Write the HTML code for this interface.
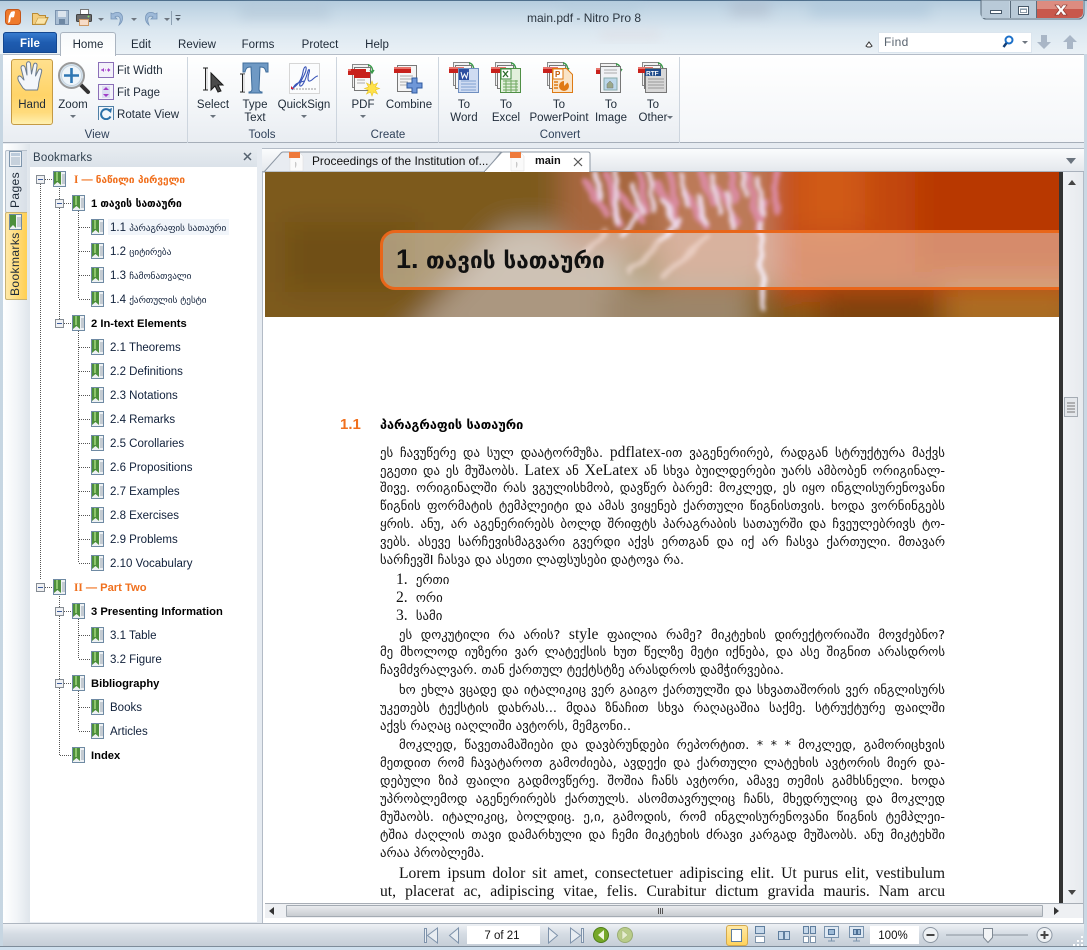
<!DOCTYPE html>
<html><head><meta charset="utf-8"><title>main.pdf - Nitro Pro 8</title>
<style>
html,body{margin:0;padding:0}
body{position:relative;width:1087px;height:950px;overflow:hidden;background:#d9e5ef;font-family:"Liberation Sans","DejaVu Sans",sans-serif;font-size:11.5px;color:#1e2a38}
.a{position:absolute}
.t{position:absolute;white-space:nowrap;line-height:14px;letter-spacing:.03px}
.c{transform:translateX(-50%);margin-top:1px}
.g{color:#2f4159}
.r{position:absolute;white-space:nowrap;line-height:16px;font-size:11.5px;color:#10203a;margin-top:1px}
.k{font-family:"DejaVu Sans",sans-serif}
.b{font-weight:bold;color:#000;font-size:11.2px}
.o{color:#f0701e}
.l{position:absolute;left:380px;width:565px;height:18px;line-height:18px;font-family:"DejaVu Sans",sans-serif;font-size:12.8px;color:#111;text-align:justify;text-align-last:justify;margin-top:1px}
.i{left:399px;width:546px}
.n{text-align-last:left}
.l span{font-family:"Liberation Serif",serif;font-size:15.6px}
</style></head><body>

<!-- window chrome background -->
<div class="a" style="left:0;top:0;width:1087px;height:54px;background:linear-gradient(#b4cbdd 0,#c5d8e6 12px,#dbe7f0 30px,#eaf1f6 54px)"></div>
<div class="a" style="left:0;top:0;width:1087px;height:1px;background:#4f6f8c"></div>
<div class="a" style="left:0;top:54px;width:3px;height:896px;background:#c7d6e2"></div>
<div class="a" style="left:1084px;top:54px;width:3px;height:896px;background:#c9d8e4"></div>
<div class="a" style="left:3px;top:54px;width:1081px;height:892px;background:#e6ebf1"></div>

<svg class="a" style="left:0;top:0" width="1087" height="54">
 <defs><filter id="bl"><feGaussianBlur stdDeviation="6"/></filter></defs>
 <g filter="url(#bl)" opacity=".3">
  <rect x="240" y="5" width="90" height="14" fill="#9fb4c6"/><rect x="730" y="2" width="40" height="14" fill="#9b9fb0"/>
  <rect x="810" y="4" width="120" height="12" fill="#8fb0cc"/><rect x="560" y="4" width="80" height="10" fill="#a7c4d6"/>
  <rect x="600" y="30" width="60" height="10" fill="#dccfd3"/>
 </g>
 <!-- app logo -->
 <rect x="5.500" y="9.500" width="15" height="15" rx="3" fill="#ee7a2c" stroke="#c4561a"/>
 <path d="M11 12c2-1 4-1 4 0l-1 5c-2 1-3 0-3 0l-1 5-2 1 1-7z" fill="#fff"/>
 <!-- folder -->
 <path d="M32.500 24.500v-11h5l2 2h6v2h2.500l-3 7z" fill="#f3cd7e" stroke="#b88a35"/>
 <path d="M35 24l3-6h9.500l-3 6z" fill="#fbe4a8" stroke="#c19a45" stroke-width=".6"/>
 <!-- save -->
 <rect x="55.500" y="10.500" width="13" height="14" fill="#a8bdd3" stroke="#7b93ae"/>
 <rect x="58" y="11" width="8" height="6" fill="#dbe4ed"/><rect x="59" y="19" width="6" height="5" fill="#6d87a3"/>
 <!-- print -->
 <rect x="80.500" y="9.500" width="8" height="5" fill="#fff" stroke="#777"/>
 <rect x="76.500" y="14.500" width="15" height="7" rx="1" fill="#6b6b6b" stroke="#444"/>
 <rect x="79.500" y="19.500" width="9" height="6" fill="#f6dcc8" stroke="#c96"/>
 <circle cx="88.500" cy="16.500" r="1" fill="#7fdc6a"/>
 <path d="M98 18h6l-3 3z" fill="#6e7680"/>
 <!-- undo -->
 <path d="M111 13v6h6l-2-2c3-2 6 0 5 5l-1 3c4-3 5-9 1-12-2-1-5-1-7 1z" fill="#9db9d8" stroke="#7896b8" stroke-width=".8"/>
 <path d="M131 18h6l-3 3z" fill="#6e7680"/>
 <!-- redo -->
 <path d="M157 13v6h-6l2-2c-3-2-6 0-5 5l1 3c-4-3-5-9-1-12 2-1 5-1 7 1z" fill="#9db9d8" stroke="#7896b8" stroke-width=".8"/>
 <path d="M164 18h6l-3 3z" fill="#6e7680"/>
 <rect x="171" y="11" width="1" height="14" fill="#8da0b2"/>
 <path d="M175.500 15h5v1h-5zM175.500 18h5l-2.500 3z" fill="#55606c"/>
 <!-- window buttons -->
 <path d="M981 0h103v13a5 6 0 0 1-5 6h-93a5 6 0 0 1-5-6z" fill="#d2e0ea" stroke="#5a6c7c"/>
 <rect x="981.500" y="1" width="28" height="17" fill="#b9cad8"/><rect x="1010.500" y="1" width="26" height="17" fill="#b9cad8" />
 <path d="M1036 1h47v12a5 5 0 0 1-5 5h-42z" fill="#c8584c"/>
 <path d="M1036 1h47v8h-47z" fill="#dd8c80"/>
 <rect x="1010" y="1" width="1" height="17" fill="#5a6c7c"/><rect x="1036" y="1" width="1" height="17" fill="#5a6c7c"/>
 <rect x="990.500" y="10.500" width="11" height="3" fill="#fff" stroke="#47596a"/>
 <rect x="1018.500" y="6.500" width="10" height="8" fill="none" stroke="#47596a"/><rect x="1019.500" y="7.500" width="8" height="6" fill="none" stroke="#fff"/><rect x="1020.500" y="9.500" width="6" height="3" fill="#fff" stroke="#47596a" stroke-width=".5"/>
 <path d="M1055 5l4 0 2 3 2-3 4 0-4 5 4 5-4 0-2-3-2 3-4 0 4-5z" fill="#fff" stroke="#7a2b22" stroke-width=".6"/>
 <!-- find area -->
 <rect x="878.500" y="32.500" width="153" height="20" fill="#fff" stroke="#dbe5ee"/>
 <path d="M866 46l3-4 3 4-1.500 1h-3z" fill="#fff" stroke="#333" stroke-width="1"/>
 <circle cx="1009" cy="40" r="3.500" fill="none" stroke="#1c70c8" stroke-width="2"/><path d="M1006.500 43l-3 4" stroke="#123f78" stroke-width="2.400"/>
 <path d="M1022 41h6l-3 3z" fill="#6e7680"/>
 <path d="M1041 35h6v7h4l-7 7-7-7h4z" fill="#a9b6c6"/>
 <path d="M1067 49h6v-7h4l-7-7-7 7h4z" fill="#a9b6c6"/>
</svg>
<div class="t" style="left:527px;top:11px;color:#2c3640;font-size:12px;letter-spacing:0">main.pdf - Nitro Pro 8</div>
<div class="t" style="left:884px;top:35px;color:#5a6570;font-size:12px;letter-spacing:.3px">Find</div>

<!-- ribbon tabs -->
<div class="a" style="left:3px;top:32px;width:54px;height:21px;background:linear-gradient(#3a7fd2,#1e5cb0 50%,#1a53a4);border-radius:3px 3px 0 0;box-shadow:inset 0 0 0 1px #14478f"></div>
<div class="t c" style="left:30px;top:36px;color:#fff;font-weight:bold;font-size:11.500px">File</div>
<div class="a" style="left:60px;top:32px;width:54px;height:23px;background:linear-gradient(#f6f9fb,#fff);border:1px solid #aab4c0;border-bottom:0;border-radius:3px 3px 0 0;z-index:2"></div>
<div class="t c" style="left:88px;top:37px;z-index:3">Home</div>
<div class="t c" style="left:141px;top:37px">Edit</div>
<div class="t c" style="left:197px;top:37px">Review</div>
<div class="t c" style="left:258px;top:37px">Forms</div>
<div class="t c" style="left:320px;top:37px">Protect</div>
<div class="t c" style="left:377px;top:37px">Help</div>

<!-- ribbon -->
<div class="a" style="left:3px;top:54px;width:1081px;height:89px;background:linear-gradient(#fff,#f6f8fa 45%,#e9edf2);border-top:1px solid #b4bcc7;border-bottom:1px solid #a6aeb9;box-sizing:border-box"></div>
<div class="a" style="left:187px;top:57px;width:1px;height:86px;background:#cdd5de"></div>
<div class="a" style="left:336px;top:57px;width:1px;height:86px;background:#cdd5de"></div>
<div class="a" style="left:438px;top:57px;width:1px;height:86px;background:#cdd5de"></div>
<div class="a" style="left:679px;top:57px;width:1px;height:86px;background:#cdd5de"></div>
<div class="a" style="left:680px;top:55px;width:404px;height:87px;background:linear-gradient(#fff,#f3f5f8)"></div>

<div class="a" style="left:11px;top:59px;width:40px;height:64px;background:linear-gradient(#ffe08e,#ffd468 55%,#ffdb7c 82%,#fff0b0);border:1px solid #c49a45;border-radius:3px"></div>

<svg class="a" style="left:0;top:55px" width="700" height="65" viewBox="0 55 700 65">
 <defs>
  <g id="stack">
   <rect x="4.500" y=".5" width="16" height="23" fill="#f2f2f2" stroke="#888"/>
   <rect x="6.500" y="3.500" width="16" height="23" fill="#f8f8f8" stroke="#777"/>
   <path d="M9 10h11M9 13h11M9 16h8M9 19h8" stroke="#aaa"/>
   <rect x="0" y="5" width="15" height="6" fill="#c8211c"/><rect x="0" y="5" width="15" height="2" fill="#e8746c"/>
   <path d="M20 1a5 5 0 0 1 4 7M22 6l2 3 2-3" fill="none" stroke="#3a9a4a" stroke-width="1.400"/>
  </g>
 </defs>
 <!-- hand -->
 <path d="M23 88c-3-5-6-8-5-11 1-2 3-1 5 2l1 1-3-12c0-3 3-3 4-1l2 8-.5-11c0-3 4-3 4 0l1 10 2-9c1-3 4-2 3.500 1l-1.500 10 3-6c1-2 4-1 3 2-1 5-3 9-3 14l-1 4h-12z" fill="#f3f6fa" stroke="#6b7c90" stroke-linejoin="round"/>
 <!-- zoom -->
 <path d="M80 84l8 8" stroke="#333" stroke-width="4" stroke-linecap="round"/>
 <circle cx="71.500" cy="75.500" r="12.500" fill="#d6e6f2" stroke="#9a9a9a" stroke-width="2"/>
 <circle cx="71.500" cy="75.500" r="10" fill="#eef5fa" stroke="#c8d4de"/>
 <path d="M71.500 68v15M64 75.500h15" stroke="#2f77b3" stroke-width="2.600"/>
 <!-- fit -->
 <rect x="98.500" y="62.500" width="15" height="15" fill="#f3f1fa" stroke="#8b6fb8"/>
 <path d="M101 70h10" stroke="#a23cc8" stroke-dasharray="1 1"/><path d="M104 68l-2.500 2 2.500 2zM108 68l2.500 2-2.500 2z" fill="#a23cc8"/>
 <rect x="98.500" y="84.500" width="15" height="15" fill="#f3f1fa" stroke="#8b6fb8"/>
 <rect x="102" y="86" width="8" height="12" fill="#dcdcf2"/><path d="M106 87l-3 3h6zM106 97l-3-3h6z" fill="#a23cc8"/>
 <rect x="98.500" y="106.500" width="15" height="15" fill="#f1f6fb" stroke="#4f7fa6"/>
 <path d="M109.500 110.500a5 5 0 1 0 1 6" fill="none" stroke="#2a70a8" stroke-width="2"/><path d="M107 110l4 3 1-5z" fill="#2a70a8"/>
 <!-- select -->
 <path d="M203 68h5M203 90h5M205.500 68v22" stroke="#222" fill="none"/><path d="M207 68.500v21" stroke="#ccc"/>
 <path d="M211 73v17l4-4 3 6 3-1-3-6h5z" fill="#4a4a4a" stroke="#1a1a1a"/>
 <!-- type text -->
 <path d="M243 63h25v9h-2c-1-4-2-5-6-5l-1 22c0 2 1 3 3 3v1h-13v-1c2 0 3-1 3-3l-1-22c-4 0-5 1-6 5h-2z" fill="#6f99c4" stroke="#3f6d9c"/>
 <path d="M240 74h5M240 92h5M242.500 74v18" stroke="#222"/><path d="M244 74v18" stroke="#ccc"/>
 <!-- quicksign -->
 <rect x="289.500" y="63.500" width="30" height="30" fill="#fbfcfd" stroke="#d6d6d6"/>
 <path d="M292 90c4-9 8-7 12-9M293 88c6-4 9-10 10-16 1-6 4-7 3-2-1 6-8 14-6 16 3 1 6-8 8-15 1-3 2-1 1 2s-2 9 1 8c3-1 5-5 8-5" fill="none" stroke="#3a55b8" stroke-width="1.100"/>
 <path d="M293 89h24" stroke="#999" stroke-dasharray="2 1"/><path d="M291 86l3 3-3 0z" fill="#d0203a"/>
 <!-- PDF -->
 <use href="#stack" x="348" y="64"/><rect x="351" y="69" width="15" height="6" fill="#c8211c"/>
 <rect x="354" y="72" width="16" height="6" fill="#c8211c"/>
 <path d="M372 81l1.500 4 4-2-2 4 4 1.500-4 1.500 2 4-4-2-1.500 4-1.500-4-4 2 2-4-4-1.500 4-1.500-2-4 4 2z" fill="#ffe14a" stroke="#e8c420" stroke-width=".6"/>
 <!-- combine -->
 <rect x="397.500" y="65.500" width="19" height="26" fill="#f5f5f5" stroke="#777"/>
 <path d="M400 76h13M400 79h13M400 82h8M400 85h8" stroke="#aaa"/>
 <rect x="394" y="67" width="17" height="6" fill="#c8211c"/><rect x="394" y="67" width="17" height="2" fill="#e8746c"/>
 <path d="M412 78h5v5h5v5h-5v5h-5v-5h-5v-5h5z" fill="#6f97d8" stroke="#2f5aa0"/>
 <!-- word -->
 <use href="#stack" x="449" y="62"/>
 <rect x="458.500" y="68.500" width="20" height="24" fill="#cfdcf2" stroke="#6f8fc0"/>
 <path d="M461 81h15M461 84h15M461 87h15M461 90h15" stroke="#7f9fd0"/>
 <rect x="459" y="69" width="10" height="11" fill="#2e4fa0"/><path d="M461 72l1.500 6 2-4 2 4 1.500-6" fill="none" stroke="#fff"/>
 <!-- excel -->
 <use href="#stack" x="491" y="62"/>
 <rect x="500.500" y="68.500" width="20" height="24" fill="#e2f0dc" stroke="#4f8f45"/>
 <path d="M503 81h15M503 84h15M503 87h15M503 90h15M506 80v12M511 80v12M516 80v12" stroke="#6fa860"/>
 <rect x="501" y="69" width="10" height="10" fill="#fff" stroke="#3e8a3c"/><path d="M503 71l5 6M508 71l-5 6" stroke="#2a6a2a" stroke-width="1.300"/>
 <!-- ppt -->
 <use href="#stack" x="543" y="62"/>
 <path d="M552.500 68.500h14l6 6v18h-20z" fill="#f9e4c8" stroke="#dd7a14"/>
 <rect x="553" y="69" width="10" height="10" fill="#fff" stroke="#dd7a14"/><text x="555" y="77" font-size="8" font-weight="bold" fill="#c05a0a" font-family="Liberation Sans,sans-serif">P</text>
 <circle cx="564" cy="86" r="5" fill="#e07a14"/><path d="M564 86v-6h6z" fill="#f9e4c8"/>
 <path d="M554 82h4M554 85h4M554 88h4" stroke="#dd7a14" stroke-width="1.500"/>
 <!-- image -->
 <use href="#stack" x="596" y="63"/>
 <rect x="600.500" y="66.500" width="20" height="26" fill="#f0f2f5" stroke="#777"/>
 <rect x="604" y="78" width="13" height="12" fill="#bcd8ea" stroke="#8aa"/><path d="M607 88v-4l3-3 3 3v4z" fill="#9aa88a" stroke="#777" stroke-width=".5"/>
 <path d="M604 70h13M604 73h13" stroke="#aaa"/>
 <!-- other -->
 <use href="#stack" x="638" y="62"/>
 <rect x="645.500" y="68.500" width="21" height="24" fill="#d8d8d8" stroke="#777"/>
 <path d="M648 79h16M648 82h16M648 85h16M648 88h16" stroke="#999"/>
 <rect x="645" y="69" width="16" height="7" fill="#1e4a8a"/><text x="646" y="75.500" font-size="6.500" font-weight="bold" fill="#fff" font-family="Liberation Sans,sans-serif">RTF</text>
 <!-- carets -->
 <path d="M70 115h6l-3 3zM210 115h6l-3 3zM301 115h6l-3 3zM360 115h6l-3 3zM667 116h6l-3 3z" fill="#6a737d"/>
</svg>

<div class="t c" style="left:32px;top:97px">Hand</div>
<div class="t c" style="left:73px;top:97px" >Zoom</div>
<div class="t" style="left:117px;top:64px">Fit Width</div>
<div class="t" style="left:117px;top:86px">Fit Page</div>
<div class="t" style="left:117px;top:108px">Rotate View</div>
<div class="t c g" style="left:97px;top:127px">View</div>
<div class="t c" style="left:213px;top:97px">Select</div>
<div class="t c" style="left:255px;top:97px">Type</div>
<div class="t c" style="left:255px;top:110px">Text</div>
<div class="t c" style="left:304px;top:97px">QuickSign</div>
<div class="t c g" style="left:262px;top:127px">Tools</div>
<div class="t c" style="left:363px;top:97px">PDF</div>
<div class="t c" style="left:409px;top:97px">Combine</div>
<div class="t c g" style="left:388px;top:127px">Create</div>
<div class="t c" style="left:464px;top:97px">To</div><div class="t c" style="left:464px;top:110px">Word</div>
<div class="t c" style="left:506px;top:97px">To</div><div class="t c" style="left:506px;top:110px">Excel</div>
<div class="t c" style="left:559px;top:97px">To</div><div class="t c" style="left:559px;top:110px">PowerPoint</div>
<div class="t c" style="left:611px;top:97px">To</div><div class="t c" style="left:611px;top:110px">Image</div>
<div class="t c" style="left:653px;top:97px">To</div><div class="t c" style="left:653px;top:110px">Other</div>
<div class="t c g" style="left:560px;top:127px">Convert</div>

<!-- left rail -->
<div class="a" style="left:3px;top:144px;width:27px;height:780px;background:linear-gradient(90deg,#fff,#f2f5f8 50%,#dfe5eb)"></div>
<div class="a" style="left:5px;top:150px;width:21px;height:61px;background:linear-gradient(90deg,#e9eef3,#d8dfe7);border:1px solid #b6c0cb;border-right:0;border-radius:2px 0 0 2px"></div>
<div class="a" style="left:5px;top:212px;width:21px;height:86px;background:linear-gradient(90deg,#ffe9a8,#ffcf52);border:1px solid #c8b273;border-right:0;border-radius:2px 0 0 2px"></div>
<svg class="a" style="left:8px;top:151px" width="16" height="80">
 <rect x="1.500" y=".5" width="12" height="15" fill="#eef2f6" stroke="#7f96ac"/>
 <rect x="3" y="2" width="9" height="3" fill="#bccbdb"/><path d="M3 7h9M3 9h9M3 11h9M3 13h9" stroke="#9fb0c2"/>
 <rect x="1.500" y="63.500" width="12" height="15" fill="#eef1f4" stroke="#6f8aa3"/><path d="M2 64h6v13l-3-3-3 3z" fill="#4d8f3c"/><path d="M9 67h4M9 69h4M9 71h4M9 73h4M9 75h4" stroke="#9aa5af"/>
</svg>
<div class="a" style="left:8px;top:172px;height:36px;width:15px;writing-mode:vertical-rl;transform:rotate(180deg);line-height:15px;text-align:left;letter-spacing:.4px;white-space:nowrap;font-size:12px">Pages</div>
<div class="a" style="left:8px;top:235px;height:61px;width:15px;writing-mode:vertical-rl;transform:rotate(180deg);line-height:15px;text-align:left;letter-spacing:.4px;white-space:nowrap;font-size:12px">Bookmarks</div>

<!-- bookmarks panel -->
<div class="a" style="left:30px;top:149px;width:227px;height:18px;background:linear-gradient(#e6ebf0,#dbe2e9)"></div>
<div class="t" style="left:33px;top:151px;font-size:11.500px;color:#30404f;letter-spacing:.2px">Bookmarks</div>
<svg class="a" style="left:243px;top:152px" width="9" height="9"><path d="M1 1l7 7M8 1l-7 7" stroke="#55626f" stroke-width="1.500"/></svg>
<div class="a" style="left:30px;top:167px;width:227px;height:755px;background:#fff"></div>
<div class="a" style="left:108px;top:219px;width:121px;height:16px;background:#f1f5fa"></div>

<svg class="a" style="left:0;top:160px" width="260" height="610" viewBox="0 160 260 610">
 <defs>
  <g id="bm"><rect x=".5" y=".5" width="12" height="15" fill="#eef1f4" stroke="#6f8aa3"/><path d="M1 1h7v13l-3.500-3-3.500 3z" fill="#4d8f3c"/><path d="M3 1h2v9h-2z" fill="#8dc66e"/><path d="M9 4h3M9 6h3M9 8h3M9 10h3M9 12h3" stroke="#9aa5af"/></g>
  <g id="ex"><rect x=".5" y=".5" width="8" height="8" fill="#f0f1f3" stroke="#858c94"/><rect x="2" y="4" width="5" height="1" fill="#3b5a9a"/></g>
 </defs>
 <g stroke="#555" stroke-dasharray="1 1" fill="none">
  <path d="M40.500 184v395M59.500 184v139M59.500 592v163M78.500 207v92M78.500 327v236M78.500 615v44M78.500 687v44"/>
  <path d="M45 179.500h7M64 203.500h7M79 227.500h11M79 251.500h11M79 275.500h11M79 299.500h11M64 323.500h7"/>
  <path d="M79 347.500h11M79 371.500h11M79 395.500h11M79 419.500h11M79 443.500h11M79 467.500h11M79 491.500h11M79 515.500h11M79 539.500h11M79 563.500h11"/>
  <path d="M45 587.500h7M64 611.500h7M79 635.500h11M79 659.500h11M64 683.500h7M79 707.500h11M79 731.500h11M60 755.500h11"/>
 </g>
 <use href="#ex" x="36" y="175"/><use href="#ex" x="55" y="199"/><use href="#ex" x="55" y="319"/><use href="#ex" x="36" y="583"/><use href="#ex" x="55" y="607"/><use href="#ex" x="55" y="679"/>
 <use href="#bm" x="53" y="171"/><use href="#bm" x="72" y="195"/>
 <use href="#bm" x="91" y="219"/><use href="#bm" x="91" y="243"/><use href="#bm" x="91" y="267"/><use href="#bm" x="91" y="291"/>
 <use href="#bm" x="72" y="315"/>
 <use href="#bm" x="91" y="339"/><use href="#bm" x="91" y="363"/><use href="#bm" x="91" y="387"/><use href="#bm" x="91" y="411"/><use href="#bm" x="91" y="435"/><use href="#bm" x="91" y="459"/><use href="#bm" x="91" y="483"/><use href="#bm" x="91" y="507"/><use href="#bm" x="91" y="531"/><use href="#bm" x="91" y="555"/>
 <use href="#bm" x="53" y="579"/><use href="#bm" x="72" y="603"/><use href="#bm" x="91" y="627"/><use href="#bm" x="91" y="651"/><use href="#bm" x="72" y="675"/><use href="#bm" x="91" y="699"/><use href="#bm" x="91" y="723"/><use href="#bm" x="72" y="747"/>
</svg>

<div class="r b o" style="left:74px;top:171px;color:#f0701e"><span style="font-family:'Liberation Serif',serif">I</span> — <span class="k" style="font-size:10px">ნაწილი პირველი</span></div>
<div class="r b" style="left:91px;top:195px">1 <span class="k" style="font-size:10.300px">თავის სათაური</span></div>
<div class="r" style="left:110px;top:219px">1.1 <span class="k" style="font-size:9.200px">პარაგრაფის სათაური</span></div>
<div class="r" style="left:110px;top:243px">1.2 <span class="k" style="font-size:9.200px">ციტირება</span></div>
<div class="r" style="left:110px;top:267px">1.3 <span class="k" style="font-size:9.200px">ჩამონათვალი</span></div>
<div class="r" style="left:110px;top:291px">1.4 <span class="k" style="font-size:9.200px">ქართულის ტესტი</span></div>
<div class="r b" style="left:91px;top:315px">2 In-text Elements</div>
<div class="r" style="left:110px;top:339px">2.1 Theorems</div>
<div class="r" style="left:110px;top:363px">2.2 Definitions</div>
<div class="r" style="left:110px;top:387px">2.3 Notations</div>
<div class="r" style="left:110px;top:411px">2.4 Remarks</div>
<div class="r" style="left:110px;top:435px">2.5 Corollaries</div>
<div class="r" style="left:110px;top:459px">2.6 Propositions</div>
<div class="r" style="left:110px;top:483px">2.7 Examples</div>
<div class="r" style="left:110px;top:507px">2.8 Exercises</div>
<div class="r" style="left:110px;top:531px">2.9 Problems</div>
<div class="r" style="left:110px;top:555px">2.10 Vocabulary</div>
<div class="r b" style="left:74px;top:579px;color:#f0701e"><span style="font-family:'Liberation Serif',serif">II</span> — Part Two</div>
<div class="r b" style="left:91px;top:603px">3 Presenting Information</div>
<div class="r" style="left:110px;top:627px">3.1 Table</div>
<div class="r" style="left:110px;top:651px">3.2 Figure</div>
<div class="r b" style="left:91px;top:675px">Bibliography</div>
<div class="r" style="left:110px;top:699px">Books</div>
<div class="r" style="left:110px;top:723px">Articles</div>
<div class="r b" style="left:91px;top:747px">Index</div>

<!-- doc area -->
<div class="a" style="left:262px;top:148px;width:822px;height:776px;background:#fff;box-sizing:border-box;border:1px solid #b3bbc6"></div>
<svg class="a" style="left:262px;top:149px" width="822" height="24">
 <defs><linearGradient id="ts" x1="0" x2="0" y1="0" y2="1"><stop offset="0" stop-color="#fbfcfd"/><stop offset="1" stop-color="#e3e7ec"/></linearGradient></defs>
 <rect width="822" height="23" fill="url(#ts)"/>
 <rect y="22" width="822" height="1" fill="#a9b1bc"/>
 <path d="M2 23l17-19q1-1 2-1h218l-16 20z" fill="#e8ecf1" stroke="#8e98a4"/>
 <path d="M222 23l17-19q1-1 2-1h85q2 0 2 2v18z" fill="#fff" stroke="#8e98a4"/>
 <path d="M223 23h104" stroke="#fff" stroke-width="2"/>
 <path d="M28 3h9l4 4v15h-13z" fill="#fafafa" stroke="#ddd" stroke-width=".5"/><rect x="27" y="3" width="11" height="6" fill="#ee7a3c"/><path d="M33 13c2-1 2 5 0 6z" fill="#c9c9c9"/>
 <path d="M249 3h9l4 4v15h-13z" fill="#fafafa" stroke="#ddd" stroke-width=".5"/><rect x="248" y="3" width="11" height="6" fill="#ee7a3c"/><path d="M254 13c2-1 2 5 0 6z" fill="#c9c9c9"/>
 <path d="M312 9l8 8M320 9l-8 8" stroke="#555" stroke-width="1.200"/>
 <path d="M804 9h10l-5 6z" fill="#6a737d"/>
</svg>
<div class="t" style="left:312px;top:154px;font-size:11.900px;color:#111;letter-spacing:0">Proceedings of the Institution of...</div>
<div class="t" style="left:535px;top:154px;font-size:11px;color:#111;font-weight:bold;letter-spacing:0">main</div>

<!-- page -->
<div class="a" style="left:265px;top:172px;width:794px;height:731px;background:#fff;overflow:hidden">
 <svg class="a" style="left:0;top:0" width="795" height="145">
  <defs>
   <filter id="f8" x="-20%" y="-30%" width="140%" height="160%"><feGaussianBlur stdDeviation="14"/></filter>
   <filter id="f2" x="-10%" y="-20%" width="120%" height="140%">
    <feTurbulence type="fractalNoise" baseFrequency=".03 .05" numOctaves="2" seed="4" result="n"/>
    <feDisplacementMap in="SourceGraphic" in2="n" scale="10" xChannelSelector="R" yChannelSelector="G"/>
    <feGaussianBlur stdDeviation="2.200"/>
   </filter>
   <filter id="f3"><feGaussianBlur stdDeviation="3.500"/></filter>
  </defs>
  <rect width="795" height="145" fill="#7e5a1e"/>
  <g filter="url(#f8)">
   <rect x="-30" y="-30" width="330" height="210" fill="#7d5a1d"/>
   <rect x="20" y="50" width="130" height="70" fill="#6f5019"/>
   <path d="M130 175l110-120h100l60 120z" fill="#ab9780"/>
   <rect x="295" y="-30" width="110" height="110" fill="#a8683f"/>
   <rect x="395" y="-30" width="125" height="140" fill="#bc7a58"/>
   <rect x="510" y="-30" width="320" height="160" fill="#c2470c"/>
   <rect x="530" y="-30" width="70" height="90" fill="#d05a14"/>
   <rect x="650" y="-30" width="170" height="130" fill="#b83805"/>
   <rect x="340" y="112" width="150" height="60" fill="#9c866a"/>
   <rect x="555" y="118" width="120" height="50" fill="#7c420e"/>
   <rect x="680" y="115" width="130" height="50" fill="#ab6d20"/>
  </g>
  <g filter="url(#f2)" fill="none" stroke-linecap="round" opacity=".9">
   <path d="M322 10l20 34M340 2l14 52M352 20l26 28M374 0l8 40M392 12l22 40M404 -2l6 36M420 20l22 36M436 0l10 30M452 14l20 36M466 -2l4 30M484 2l8 44M500 30l-8 30M512 0l-2 40" stroke="#dc8ca6" stroke-width="7"/>
   <path d="M330 0l6 26M348 -4l4 56M366 12l12 30M384 -2l6 40M398 30l14 26M416 4l6 30M432 24l10 30M446 2l8 40M462 20l6 36M478 0l2 24M494 8l4 34M372 44l-14 20M416 48l-20 20" stroke="#f3e4fa" stroke-width="4.500"/>
   <path d="M495 52l3 85" stroke="#f4eaff" stroke-width="5"/>
   <path d="M340 60l-24 22M398 66l-34 32M442 66l-44 38" stroke="#f3cfc4" stroke-width="6" opacity=".6"/>
  </g>
  <path d="M486 142h36" stroke="#4a7a30" stroke-width="7" filter="url(#f3)" opacity=".85"/>
 </svg>
 <div class="a" style="left:115px;top:58px;width:700px;height:60px;box-sizing:border-box;border:3px solid #e8661a;border-radius:15px;background:rgba(255,255,255,.42)"></div>
 <div class="t" style="left:131px;top:71px;line-height:32px;font-weight:bold;font-size:27px;color:#111;letter-spacing:0">1. <span class="k" style="font-weight:bold;font-size:22.600px">თავის სათაური</span></div>
</div>
<div class="a" style="left:1059px;top:172px;width:4px;height:731px;background:#333"></div>
<div class="a" style="left:1063px;top:172px;width:20px;height:731px;background:linear-gradient(90deg,#f0f2f5,#e7eaee)"></div>
<svg class="a" style="left:1064px;top:172px" width="19" height="732">
 <path d="M4 13h8l-4-5z" fill="#444"/>
 <path d="M4 718h8l-4 5z" fill="#444"/>
 <rect x=".5" y="225.500" width="13" height="19" fill="#e4e7eb" stroke="#a4abb3"/>
 <path d="M3 231h8M3 234h8M3 237h8M3 240h8" stroke="#777"/>
</svg>

<!-- document text -->
<div class="t" style="left:340px;top:418px;color:#f0701e;font-weight:bold;font-size:15px;letter-spacing:0">1.1</div>
<div class="t k" style="left:380px;top:418px;color:#000;font-weight:bold;font-size:12.700px;letter-spacing:0">პარაგრაფის სათაური</div>

<div class="l" style="top:443px">ეს ჩავუწერე და სულ დაატორმუზა. <span>pdflatex</span>-ით ვაგენერირებ, რადგან სტრუქტურა მაქვს</div>
<div class="l" style="top:461px">ეგეთი და ეს მუშაობს. <span>Latex</span> ან <span>XeLatex</span> ან სხვა ბუილდერები უარს ამბობენ ორიგინალ-</div>
<div class="l" style="top:479px">შივე. ორიგინალში რას ვგულისხმობ, დავწერ ბარემ: მოკლედ, ეს იყო ინგლისურენოვანი</div>
<div class="l" style="top:497px">წიგნის ფორმატის ტემპლეიტი და ამას ვიყენებ ქართული წიგნისთვის. ხოდა ვორნინგებს</div>
<div class="l" style="top:515px">ყრის. ანუ, არ აგენერირებს ბოლდ შრიფტს პარაგრაბის სათაურში და ჩვეულებრივს ტო-</div>
<div class="l" style="top:533px">ვებს. ასევე სარჩევისმაგვარი გვერდი აქვს ერთგან და იქ არ ჩასვა ქართული. მთავარ</div>
<div class="l n" style="top:551px">სარჩევშI ჩასვა და ასეთი ლაფსუსები დატოვა რა.</div>
<div class="l n" style="top:570px;left:396px;width:500px"><span>1.</span>&nbsp; ერთი</div>
<div class="l n" style="top:588px;left:396px;width:500px"><span>2.</span>&nbsp; ორი</div>
<div class="l n" style="top:606px;left:396px;width:500px"><span>3.</span>&nbsp; სამი</div>
<div class="l i" style="top:625px">ეს დოკუტილი რა არის? <span>style</span> ფაილია რამე? მიკტეხის დირექტორიაში მოვძებნო?</div>
<div class="l" style="top:643px">მე მხოლოდ იუზერი ვარ ლატექსის ხუთ წელზე მეტი იქნება, და ასე შიგნით არასდროს</div>
<div class="l n" style="top:661px">ჩავმძვრალვარ. თან ქართულ ტექტსტზე არასდროს დამჭირვებია.</div>
<div class="l i" style="top:681px">ხო ეხლა ვცადე და იტალიკიც ვერ გაიგო ქართულში და სხვათაშორის ვერ ინგლისურს</div>
<div class="l" style="top:699px">უკეთებს ტექსტის დახრას... მდაა ზნაჩით სხვა რაღაცაშია საქმე. სტრუქტურე ფაილში</div>
<div class="l n" style="top:717px">აქვს რაღაც იაღლიში ავტორს, მემგონი..</div>
<div class="l i" style="top:736px">მოკლედ, წავეთამაშიები და დავბრუნდები რეპორტით. * * * მოკლედ, გამორიცხვის</div>
<div class="l" style="top:754px">მეთდით რომ ჩავატაროთ გამოძიება, ავდექი და ქართული ლატეხის ავტორის მიერ და-</div>
<div class="l" style="top:772px">დებული ზიპ ფაილი გადმოვწერე. შოშია ჩანს ავტორი, ამავე თემის გამხსნელი. ხოდა</div>
<div class="l" style="top:790px">უპრობლემოდ აგენერირებს ქართულს. ასომთავრულიც ჩანს, მხედრულიც და მოკლედ</div>
<div class="l" style="top:808px">მუშაობს. იტალიკიც, ბოლდიც. ე,ი, გამოდის, რომ ინგლისურენოვანი წიგნის ტემპლეი-</div>
<div class="l" style="top:826px">ტშია ძაღლის თავი დამარხული და ჩემი მიკტეხის ძრავი კარგად მუშაობს. ანუ მიკტეხში</div>
<div class="l n" style="top:844px">არაა პრობლემა.</div>
<div class="l i" style="top:864px"><span>Lorem ipsum dolor sit amet, consectetuer adipiscing elit. Ut purus elit, vestibulum</span></div>
<div class="l" style="top:882px"><span>ut, placerat ac, adipiscing vitae, felis. Curabitur dictum gravida mauris. Nam arcu</span></div>

<!-- horizontal scrollbar -->
<div class="a" style="left:265px;top:903px;width:818px;height:15px;background:#eef0f3;border-top:1px solid #a8aeb6;box-sizing:border-box"></div>
<div class="a" style="left:286px;top:905px;width:757px;height:12px;background:linear-gradient(#e9ebee,#c8ccd1);border:1px solid #a4abb3;box-sizing:border-box;border-radius:1px"></div>
<svg class="a" style="left:265px;top:904px" width="800" height="14">
 <path d="M9 3v8l-5-4zM789 3v8l5-4z" fill="#333"/>
 <path d="M393.500 4v6M395.500 4v6M397.500 4v6" stroke="#555"/>
</svg>

<!-- status bar -->
<div class="a" style="left:3px;top:923px;width:1081px;height:23px;background:linear-gradient(#eef1f5,#d5dce4 45%,#c6ced8);border-top:1px solid #aeb6c0;box-sizing:border-box"></div>
<div class="a" style="left:0;top:946px;width:1087px;height:4px;background:#cfe0ee;border-top:1px solid #7e8c9a;box-sizing:border-box"></div>
<div class="a" style="left:467px;top:926px;width:73px;height:18px;background:#fff"></div>
<div class="t c" style="left:502px;top:928px;color:#111;font-size:11.500px;letter-spacing:0">7 of 21</div>
<div class="a" style="left:726px;top:925px;width:20px;height:19px;background:linear-gradient(#ffe9a6,#ffd35c);border:1px solid #d3a94e;border-radius:3px"></div>
<div class="a" style="left:870px;top:926px;width:49px;height:18px;background:#fff"></div>
<div class="t c" style="left:893px;top:928px;color:#111;font-size:11.500px;letter-spacing:0">100%</div>
<svg class="a" style="left:420px;top:923px" width="667" height="24" viewBox="420 923 667 24">
 <g fill="#e8edf2" stroke="#7f93ab">
  <path d="M437.500 928v15l-10-7.500z"/><rect x="424.500" y="928.500" width="2" height="14"/>
  <path d="M458.500 928v15l-9-7.500z"/>
  <path d="M548.500 928v15l9-7.500z"/>
  <path d="M570.500 928v15l10-7.500z"/><rect x="581.500" y="928.500" width="2" height="14"/>
 </g>
 <circle cx="601" cy="935" r="7.500" fill="#76a82a" stroke="#4f7e1a"/><path d="M604 930v10l-6-5z" fill="#f2f7e2"/>
 <circle cx="625" cy="935" r="7.500" fill="#b9cc8a" stroke="#9aad74"/><path d="M622 930v10l6-5z" fill="#e6edd0" stroke="#a3b57a" stroke-width=".5"/>
 <rect x="731.500" y="929.500" width="10" height="12" fill="#fff" stroke="#5f7e9e"/>
 <rect x="755.500" y="926.500" width="9" height="7" fill="#c6d8ea" stroke="#5f7e9e"/><rect x="755.500" y="936.500" width="9" height="6" fill="#fff" stroke="#7f94aa"/>
 <rect x="778.500" y="931.500" width="5" height="8" fill="#c6d8ea" stroke="#5f7e9e"/><rect x="784.500" y="931.500" width="5" height="8" fill="#c6d8ea" stroke="#5f7e9e"/>
 <rect x="803.500" y="926.500" width="5" height="7" fill="#c6d8ea" stroke="#5f7e9e"/><rect x="810.500" y="926.500" width="5" height="7" fill="#c6d8ea" stroke="#5f7e9e"/><rect x="803.500" y="936.500" width="5" height="6" fill="#fff" stroke="#7f94aa"/><rect x="810.500" y="936.500" width="5" height="6" fill="#fff" stroke="#7f94aa"/>
 <rect x="824.500" y="926.500" width="14" height="11" fill="#dfe9f3" stroke="#7a93ad"/><rect x="828.500" y="929.500" width="6" height="5" fill="#9dbad6" stroke="#4f7196"/><path d="M828 941h7M831.500 938v3" stroke="#7a93ad"/>
 <rect x="849.500" y="926.500" width="14" height="11" fill="#dfe9f3" stroke="#7a93ad"/><rect x="853.500" y="929.500" width="3" height="5" fill="#9dbad6" stroke="#4f7196"/><rect x="857.500" y="929.500" width="3" height="5" fill="#9dbad6" stroke="#4f7196"/><path d="M853 941h7M856.500 938v3" stroke="#7a93ad"/>
 <circle cx="930.500" cy="935" r="7.500" fill="#eef1f4" stroke="#8c96a2"/><path d="M926.500 935h8" stroke="#444" stroke-width="2"/>
 <path d="M946 935h82" stroke="#8a929c"/>
 <path d="M983.500 928.500h9v9l-4.500 5-4.500-5z" fill="#f2f4f6" stroke="#7f8994"/>
 <circle cx="1044.500" cy="935" r="7.500" fill="#eef1f4" stroke="#8c96a2"/><path d="M1040.500 935h8M1044.500 931v8" stroke="#444" stroke-width="2"/>
 <path d="M1081 936h2v2h-2zM1077 940h2v2h-2zM1081 940h2v2h-2zM1073 944h2v2h-2zM1077 944h2v2h-2zM1081 944h2v2h-2z" fill="#fff"/>
</svg>

</body></html>
